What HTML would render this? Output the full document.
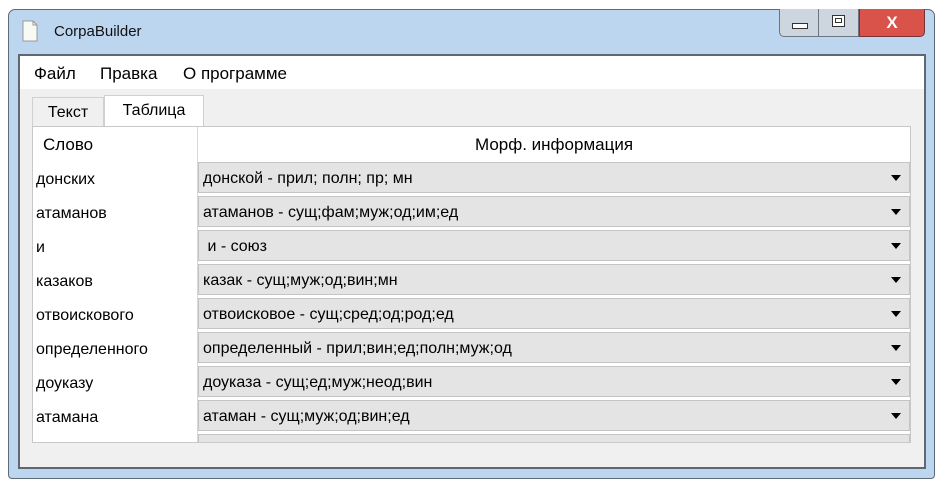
<!DOCTYPE html>
<html><head><meta charset="utf-8"><style>
*{box-sizing:border-box;margin:0;padding:0}
body{width:945px;height:489px;background:#fff;position:relative;overflow:hidden;font-family:"Liberation Sans","DejaVu Sans",sans-serif;font-size:16px;color:#000}
.win{position:absolute;left:8px;top:9px;width:927px;height:470px;background:#bcd6f0;border:1px solid #5e6b78;border-radius:7px 7px 4px 4px}
.title{position:absolute;top:23px;font-size:15px;color:#111}
.client{position:absolute;left:18px;top:54px;width:908px;height:415px;background:#f0f0f0;border:2px solid #5f6870}
.menu{position:absolute;left:0;top:0;right:0;height:33px;background:#fff}
.menu span{position:absolute;top:8px;font-size:17px}
.btns{position:absolute;left:779px;top:9px;height:28px;display:flex}
.b{width:40px;height:28px;background:#cdd6df;border:1px solid #6b7580;border-top:none}
.x{width:66px;background:#d9534b;border:1px solid #7a3330;border-top:none;border-radius:0 0 5px 0;color:#fff;font-weight:bold;text-align:center;font-size:17px;line-height:28px}
.tab{position:absolute;top:95px;height:31px;border:1px solid #d0d0d0;border-bottom:none;font-size:16px;padding-top:6px;text-align:center}
.table{position:absolute;left:32px;top:126px;width:879px;height:317px;background:#fff;border:1px solid #c8c8c8;overflow:hidden}
.col{position:absolute;left:164px;top:0;bottom:0;width:1px;background:#d8d8d8}
.hdr{position:absolute;top:8px;font-size:17px}
.w{position:absolute;left:3px;font-size:16px}
.c{position:absolute;left:165px;width:712px;height:31px;background:#e4e4e4;border:1px solid #c4c4c4;padding:7px 0 0 4px;font-size:16px}
.c:after{content:"";position:absolute;right:8px;top:12px;border-left:5px solid transparent;border-right:5px solid transparent;border-top:6px solid #000}
</style></head><body>
<div class="win"></div>
<svg style="position:absolute;left:22px;top:20px" width="16" height="22"><path d="M1 1H11L15 5V21H1Z" fill="#fafaf5" stroke="#999"/><path d="M11 1V5H15" fill="none" stroke="#999"/></svg>
<div class="title" style="left:54px">CorpaBuilder</div>
<div class="btns"><div class="b" style="border-radius:0 0 0 5px;position:relative"><div style="position:absolute;left:12px;top:14px;width:16px;height:6px;border:1px solid #333;background:#fff"></div></div><div class="b" style="position:relative;border-left:none"><div style="position:absolute;left:13px;top:6px;width:13px;height:12px;border:1px solid #333;background:#fff"><div style="margin:2px;height:5px;border:1px solid #333"></div></div></div><div class="x">X</div></div>
<div class="client"><div class="menu"><span style="left:14px">Файл</span><span style="left:80px">Правка</span><span style="left:163px">О программе</span></div></div>
<div class="tab" style="left:32px;width:72px;background:#f0f0f0;top:97px">Текст</div>
<div class="tab" style="left:104px;width:100px;background:#fff">Таблица</div>
<div class="table">
<div class="col"></div>
<div class="hdr" style="left:10px">Слово</div>
<div class="hdr" style="left:165px;width:712px;text-align:center">Морф. информация</div>
<div class="w" style="top:44px">донских</div><div class="c" style="top:35px">донской - прил; полн; пр; мн</div>
<div class="w" style="top:78px">атаманов</div><div class="c" style="top:69px">атаманов - сущ;фам;муж;од;им;ед</div>
<div class="w" style="top:112px">и</div><div class="c" style="top:103px">&nbsp;и - союз</div>
<div class="w" style="top:146px">казаков</div><div class="c" style="top:137px">казак - сущ;муж;од;вин;мн</div>
<div class="w" style="top:180px">отвоискового</div><div class="c" style="top:171px">отвоисковое - сущ;сред;од;род;ед</div>
<div class="w" style="top:214px">определенного</div><div class="c" style="top:205px">определенный - прил;вин;ед;полн;муж;од</div>
<div class="w" style="top:248px">доуказу</div><div class="c" style="top:239px">доуказа - сущ;ед;муж;неод;вин</div>
<div class="w" style="top:282px">атамана</div><div class="c" style="top:273px">атаман - сущ;муж;од;вин;ед</div>
<div style="position:absolute;left:165px;top:307px;width:712px;height:12px;background:#e4e4e4;border:1px solid #c4c4c4"></div>
</div>
</body></html>
